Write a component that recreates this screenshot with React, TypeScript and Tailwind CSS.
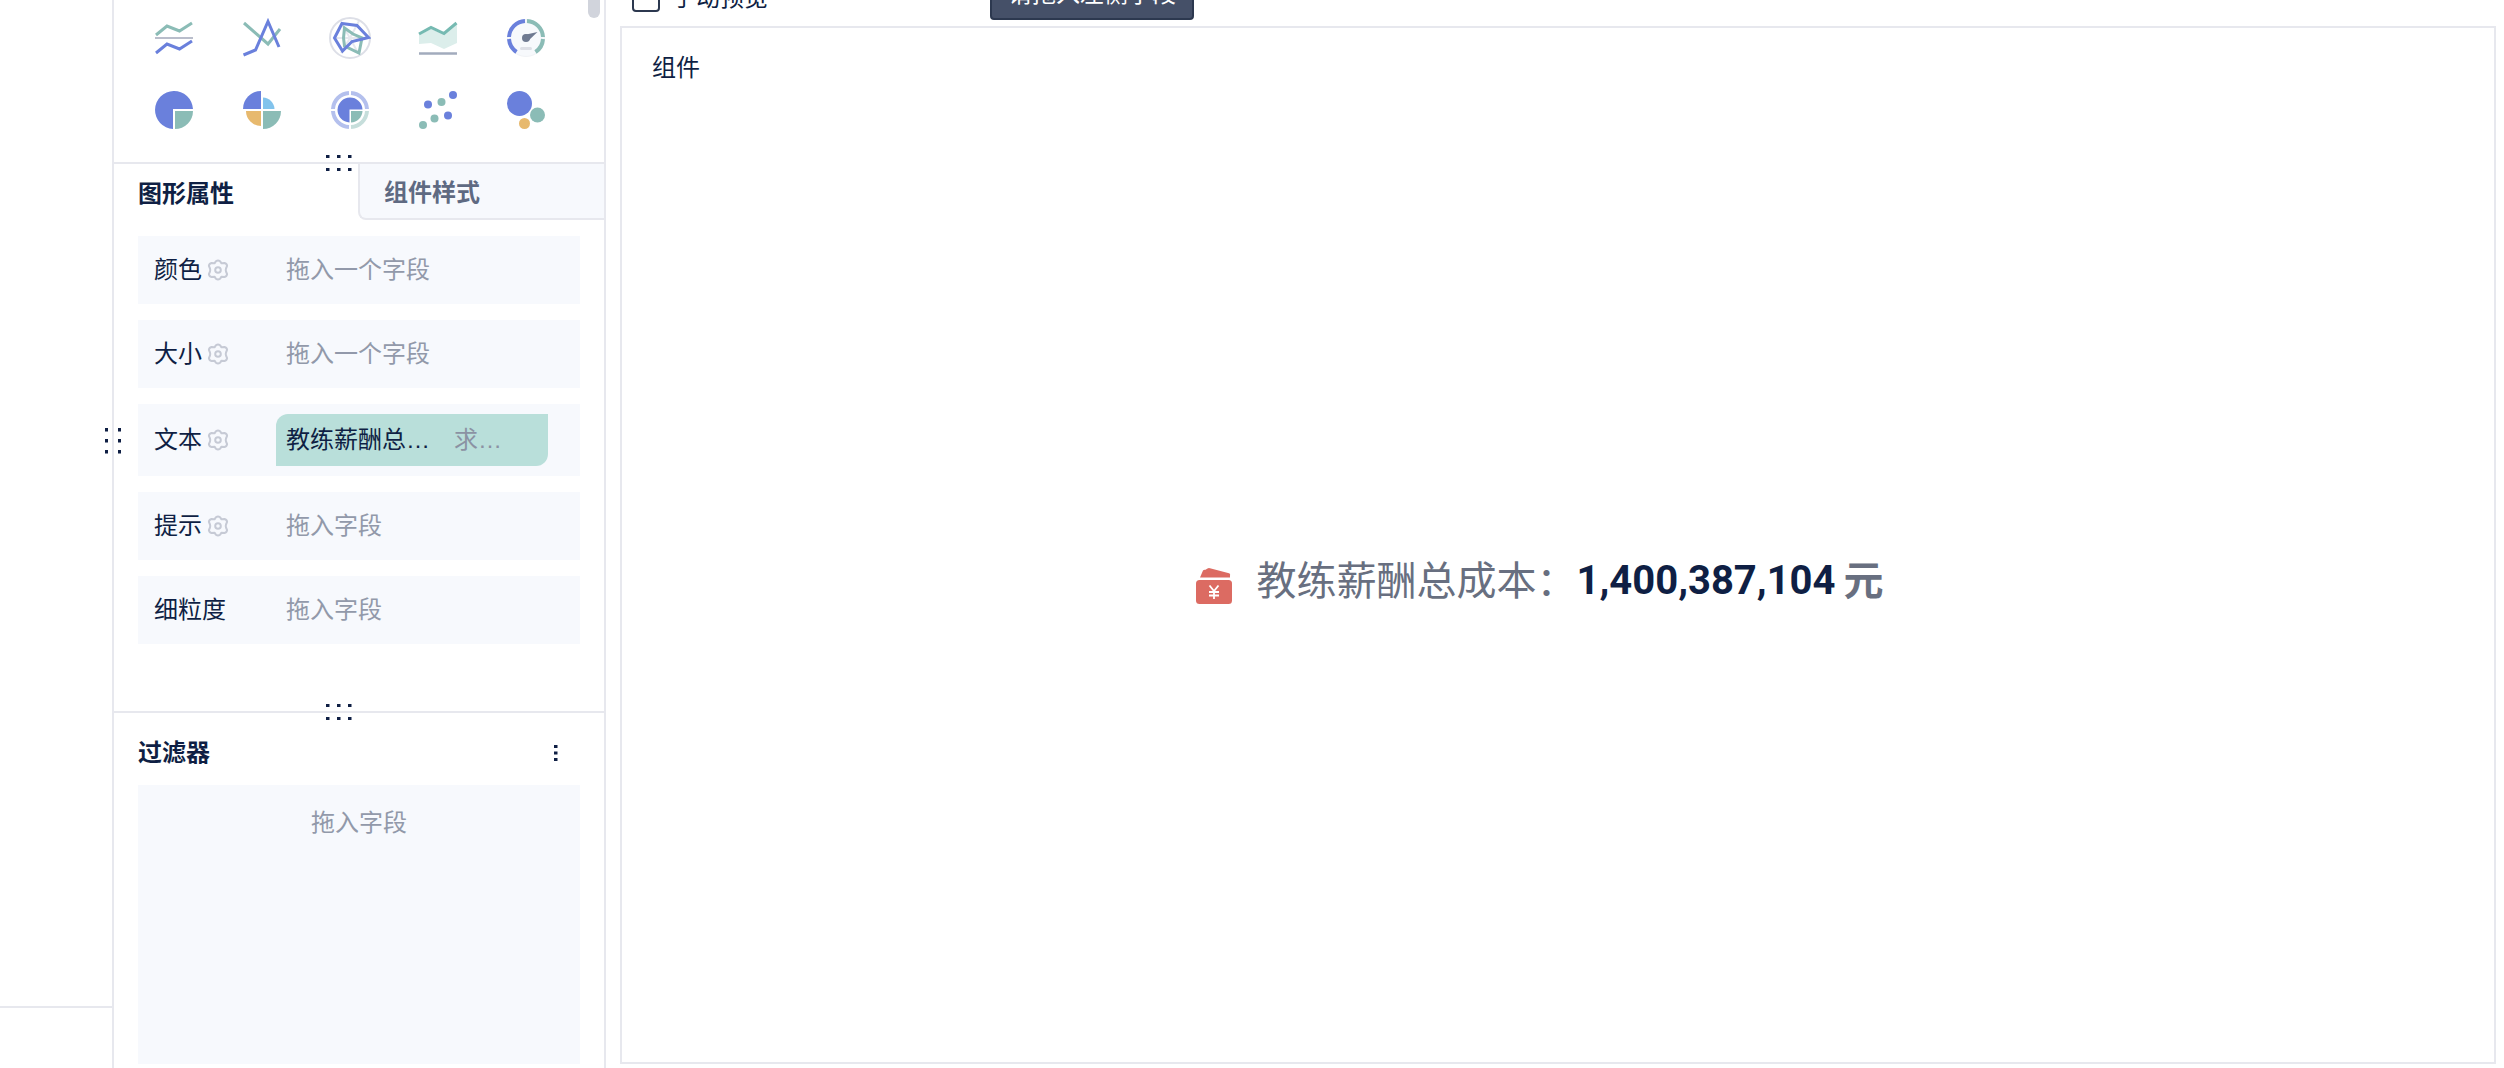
import type { ReactNode } from "react";

type FieldRow = {
    id: string;
    label: string;
    placeholder: string;
    hasSettings: boolean;
    field?: { name: string; summary: string };
};

const rows: FieldRow[] = [
    { id: "color", label: "颜色", placeholder: "拖入一个字段", hasSettings: true },
    { id: "size", label: "大小", placeholder: "拖入一个字段", hasSettings: true },
    { id: "text", label: "文本", placeholder: "", hasSettings: true, field: { name: "教练薪酬总…", summary: "求…" } },
    { id: "tip", label: "提示", placeholder: "拖入字段", hasSettings: true },
    { id: "detail", label: "细粒度", placeholder: "拖入字段", hasSettings: false },
];

const BLUE = "#6a80dc";
const TEAL = "#8bbcb6";
const YELLOW = "#e7b96e";

// Every chart icon is drawn on a 42x42 board, centred on 21,21
const charts: { name: string; icon: ReactNode }[] = [
    {
        name: "多系列折线图",
        icon: (
            <g fill="none" strokeWidth="3">
                <path d="M2 21H40" stroke="#b9bdcb" strokeWidth="2" />
                <path d="M3 18L14 9L26.500 14L39 6" stroke={TEAL} />
                <path d="M3 36L14 27L26.500 32L39 24" stroke={BLUE} />
            </g>
        ),
    },
    {
        name: "折线图",
        icon: (
            <g fill="none" strokeWidth="3">
                <path d="M3 6L27 27L39 12" stroke={TEAL} />
                <path d="M2.500 38L14.500 33L27 4.500L38 30" stroke={BLUE} />
            </g>
        ),
    },
    {
        name: "雷达图",
        icon: (
            <g fill="none">
                <circle cx="21" cy="21" r="20" stroke="#dddfe7" strokeWidth="2" />
                <path d="M21 21L12 6M21 21L30 4M21 21L37 21M21 21L29 36M21 21L12 36M21 21L5 21" stroke="#e6e8ee" strokeWidth="2" />
                <path d="M15.500 11L24 17L33 21L30 36L15.500 29L14.500 21Z" stroke={TEAL} strokeWidth="3" />
                <path d="M13 6.500L28 8.500L39.500 20.500L23 24.500L13.500 34L5.500 21Z" stroke={BLUE} strokeWidth="3" />
            </g>
        ),
    },
    {
        name: "面积图",
        icon: (
            <g fill="none">
                <path d="M2 18L14 12L27 17.500L40 7V26L27 32L14 26L2 27Z" fill="#dceeeb" />
                <path d="M2 17L14 10.500L27 16.500L39.500 6" stroke="#76bab2" strokeWidth="3" />
                <path d="M2 36.500H40" stroke="#a2abbd" strokeWidth="2.500" />
            </g>
        ),
    },
    {
        name: "仪表盘",
        icon: (
            <g fill="none">
                <circle cx="21" cy="21" r="18.500" fill="#f7f9fc" stroke="#f1f3f6" />
                <path d="M20 4A17 17 0 0 0 4 20M4 22A17 17 0 0 0 11.500 35" stroke={BLUE} strokeWidth="4" />
                <path d="M22 4A17 17 0 0 1 38 20M38 22A17 17 0 0 1 30.500 35" stroke={TEAL} strokeWidth="4" />
                <path d="M19 18L32.500 15L23 24Z" fill="#6f7a91" />
                <circle cx="21" cy="21" r="4" fill="#6f7a91" />
                <rect x="15" y="30" width="12" height="3" rx="1.500" fill="#dddfe6" />
            </g>
        ),
    },
    {
        name: "饼图",
        icon: (
            <>
                <path d="M20 21V40A19 19 0 1 1 40 20H20Z" fill={BLUE} />
                <path d="M22 22H40A18 18 0 0 1 22 40Z" fill={TEAL} />
            </>
        ),
    },
    {
        name: "玫瑰图",
        icon: (
            <>
                <path d="M20 20H2A18 18 0 0 1 20 2Z" fill={BLUE} />
                <path d="M22 20V8.500A12 12 0 0 1 33.500 20Z" fill="#82c3ec" />
                <path d="M20 22V37A15 15 0 0 1 5 22Z" fill={YELLOW} />
                <path d="M22 22H40A18 18 0 0 1 22 40Z" fill={TEAL} />
            </>
        ),
    },
    {
        name: "多层饼图",
        icon: (
            <>
                <g fill="none" strokeWidth="4">
                    <path d="M20 4A17 17 0 0 0 4 20M4 22A17 17 0 0 0 20 38M22 4A17 17 0 0 1 38 20" stroke="#b4c0ed" />
                    <path d="M38 22A17 17 0 0 1 22 38" stroke="#c6dedb" />
                </g>
                <path d="M20.500 21V33.500A12.500 12.500 0 1 1 33.500 20.500H20.500Z" fill={BLUE} />
                <path d="M22 22H33.500A12 12 0 0 1 22 33.500Z" fill={TEAL} />
            </>
        ),
    },
    {
        name: "散点图",
        icon: (
            <>
                <g fill={BLUE}>
                    <circle cx="11" cy="15.500" r="4" />
                    <circle cx="36" cy="6" r="4" />
                    <circle cx="31" cy="26.500" r="4" />
                </g>
                <g fill={TEAL}>
                    <circle cx="24.500" cy="13" r="4" />
                    <circle cx="17.500" cy="29.500" r="4" />
                    <circle cx="6" cy="36" r="4" />
                </g>
            </>
        ),
    },
    {
        name: "气泡图",
        icon: (
            <>
                <circle cx="14.500" cy="14.500" r="12.500" fill={BLUE} />
                <circle cx="32.500" cy="26" r="7.500" fill={TEAL} />
                <circle cx="19.500" cy="34.500" r="5.500" fill={YELLOW} />
            </>
        ),
    },
];

function GearIcon() {
    return (
        <svg viewBox="0 0 24 24" className="size-6" fill="none" stroke="#c6cad5" strokeWidth="2" strokeLinejoin="round" aria-hidden="true">
            <path d="M10 3.200Q12 1.800 14 3.200L15.500 5.300L18.500 5.100Q20.800 5.600 21.100 7.900L20 10.500Q19.500 12 20 13.500L21.100 16.100Q20.800 18.400 18.500 18.900L15.500 18.700L14 20.800Q12 22.200 10 20.800L8.500 18.700L5.500 18.900Q3.200 18.400 2.900 16.100L4 13.500Q4.500 12 4 10.500L2.900 7.900Q3.200 5.600 5.500 5.100L8.500 5.300Z" />
            <circle cx="12" cy="12" r="2.800" />
        </svg>
    );
}

function DragDots({ className }: { className: string }) {
    return (
        <svg viewBox="0 0 26 16" width="26" height="16" fill="#0f1f44" className={className} aria-hidden="true">
            {[0, 11, 22].map((x) => (
                <g key={x}>
                    <rect x={x} y="0" width="3.500" height="3" />
                    <rect x={x} y="13" width="3.500" height="3" />
                </g>
            ))}
        </svg>
    );
}

function MoneyIcon() {
    return (
        <svg viewBox="0 0 36 36" width="36" height="36" className="mt-2.5 shrink-0" aria-hidden="true">
            <path d="M4 9.500L7 2.500Q8 1.500 9.500 1.800L11.500 .500Q12.500 -.200 14 .200L33 5.200Q34.500 5.800 34 7.500V9.500Z" fill="#dc6b62" />
            <rect x="0" y="12" width="36" height="24" rx="3.500" fill="#dc6b62" />
            <path d="M13.500 17.500L18 23L22.500 17.500M18 23V31M13 24H23M13 27.500H23" fill="none" stroke="#fff" strokeWidth="1.800" />
        </svg>
    );
}

function AttributeRow({ row }: { row: FieldRow }) {
    return (
        <div className="flex min-h-[68px] items-center bg-[#f7f9fd] py-2.5 pl-4">
            <div className="flex w-[122px] shrink-0 items-center gap-1">
                <span>{row.label}</span>
                {row.hasSettings && (
                    <button type="button" aria-label={`${row.label}设置`} className="cursor-pointer">
                        <GearIcon />
                    </button>
                )}
            </div>

            {row.field ? (
                <div className="mr-8 flex h-13 flex-1 items-center gap-6 rounded-tl-xl rounded-br-xl bg-[#b9dfda] pl-2.5">
                    <span>{row.field.name}</span>
                    <span className="text-[#8b92a3]">{row.field.summary}</span>
                </div>
            ) : (
                <span className="pl-2.5 text-[#9299aa]">{row.placeholder}</span>
            )}
        </div>
    );
}

export default function App() {
    return (
        <div className="flex h-screen overflow-hidden bg-white font-['Liberation_Sans','Noto_Sans_CJK_SC',sans-serif] text-2xl leading-9 text-[#0f1f44]">
            <div className="flex w-28 shrink-0 flex-col">
                <div className="flex-1 border-b-2 border-[#e7e8ee]"></div>
                <div className="h-15"></div>
            </div>

            <aside className="relative flex w-[494px] shrink-0 flex-col border-x-2 border-[#e7e8ee]">
                <DragDots className="absolute top-[433px] -left-[14px] rotate-90" />

                <section className="relative grid shrink-0 grid-cols-5 border-b-2 border-[#e7e8ee] pt-0.5 pr-8.5 pb-4 pl-4">
                    {charts.map((chart) => (
                        <button key={chart.name} type="button" aria-label={chart.name} className="flex h-18 cursor-pointer items-center justify-center">
                            <svg viewBox="0 0 42 42" width="42" height="42" aria-hidden="true">
                                {chart.icon}
                            </svg>
                        </button>
                    ))}
                    <div className="absolute top-0 right-1 h-[18px] w-3 rounded-b-full bg-[#d1d4dc]"></div>
                    <DragDots className="absolute -bottom-[9px] left-[212px]" />
                </section>

                <div className="flex shrink-0 font-bold">
                    <button type="button" className="h-14 flex-1 cursor-pointer px-6 pt-1 text-left">
                        图形属性
                    </button>
                    <button type="button" className="h-14 flex-1 cursor-pointer rounded-bl-lg border-b-2 border-l-2 border-[#e7e8ee] bg-[#f7f9fd] px-6 pt-1 text-left text-[#5f6a82]">
                        组件样式
                    </button>
                </div>

                <section className="relative flex shrink-0 flex-col gap-4 border-b-2 border-[#e7e8ee] px-6 pt-4 pb-[67px]">
                    {rows.map((row) => (
                        <AttributeRow key={row.id} row={row} />
                    ))}
                    <DragDots className="absolute -bottom-[9px] left-[212px]" />
                </section>

                <section className="flex flex-1 flex-col px-6 pb-1">
                    <div className="flex h-18 shrink-0 items-center justify-between pt-2">
                        <h2 className="font-bold">过滤器</h2>
                        <button type="button" aria-label="更多" className="flex size-12 cursor-pointer items-center justify-center">
                            <svg viewBox="0 0 4 16" width="4" height="16" fill="#0f1f44" aria-hidden="true">
                                <rect x="0" y="0" width="3.500" height="3" />
                                <rect x="0" y="6.500" width="3.500" height="3" />
                                <rect x="0" y="13" width="3.500" height="3" />
                            </svg>
                        </button>
                    </div>
                    <div className="flex-1 bg-[#f7f9fd] pt-5 text-center text-[#9299aa]">拖入字段</div>
                </section>
            </aside>

            <main className="flex min-w-0 flex-1 flex-col pr-2 pb-1 pl-3.5">
                {/* The toolbar is scrolled up, only its lower edge stays visible */}
                <div className="flex h-[26px] shrink-0 items-end overflow-hidden">
                    <label className="flex w-[370px] shrink-0 items-center gap-3 pb-2.5 pl-3">
                        <input type="checkbox" className="size-7 appearance-none rounded-sm border-2 border-[#2c384f] bg-white" />
                        手动预览
                    </label>
                    <button type="button" className="mb-1.5 h-12 shrink-0 cursor-pointer rounded-sm border-2 border-[#2c384f] bg-[#455068] px-4 pb-1 text-white">
                        请拖入左侧字段
                    </button>
                </div>

                <section className="flex flex-1 flex-col border-2 border-[#e7e8ee]">
                    <h1 className="flex h-20 shrink-0 items-center px-7.5">组件</h1>

                    <div className="flex flex-1 items-center justify-center pr-9 pb-2 text-[40px] leading-15 text-[#686f80]">
                        <MoneyIcon />
                        <span className="pl-6">教练薪酬总成本：</span>
                        <span className="font-['Roboto',sans-serif] font-bold text-[#0f1f44]">1,400,387,104</span>
                        <span className="pl-2 font-bold">元</span>
                    </div>
                </section>
            </main>
        </div>
    );
}
